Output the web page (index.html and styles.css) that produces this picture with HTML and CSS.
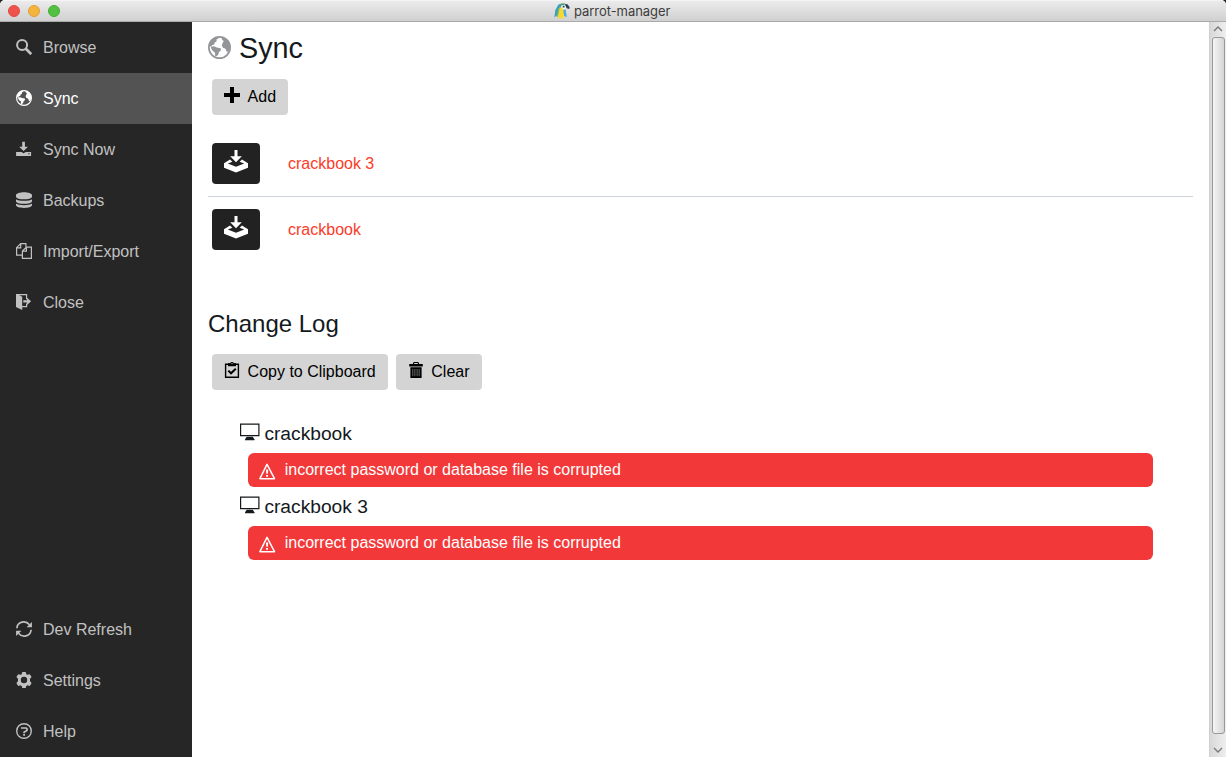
FILE: index.html
```html
<!DOCTYPE html>
<html lang="en">
<head>
<meta charset="utf-8">
<title>parrot-manager</title>
<link rel="stylesheet" href="styles.css">
</head>
<body>
<svg class="defs" width="0" height="0">
  <symbol id="search" viewBox="0 0 16 16"><circle cx="6.1" cy="6" r="5" fill="none" stroke="currentColor" stroke-width="2"/><path d="M9.6 9.5L15.2 15.2" stroke="currentColor" stroke-width="2.7"/></symbol>
  <symbol id="globe" viewBox="0 0 16 16"><circle cx="8" cy="8" r="7.4" fill="none" stroke="currentColor" stroke-width="1.2"/><path d="M2 7.5L4.2 7.2 6.1 8 8.8 8.5 9 10 7.6 11.2 7.2 12.8 5.8 14.2 5 14 4.9 11.6 3.2 10.2 2.3 8.9zM1.2 4.6L4.2 1.3 7 .6 7.3 1.8 5.8 2.5 6.1 3.5 4.6 4.7 4.2 6 2.8 6.3 2.2 7.4.9 7zM9.2.7L13 2.3 15.2 5.5 15.3 8.5 14.1 11 13 11 12.2 8.8 10.4 8.1 9.6 6.4 10.3 4.5 11 3.6 9.9 2.6z"/></symbol>
  <symbol id="download" viewBox="0 0 16 16"><path d="M6.2 .8h2.7v5H12L7.6 10 3.2 5.8h3zM.1 11h5.3l2.2 1.2L9.8 11h5.3v4H.1z"/><path class="nav-cut" d="M12.3 12.2h1.3v1h-1.3z"/></symbol>
  <symbol id="database" viewBox="0 0 16 16"><path d="M0 3.2C0-.7 16-.7 16 3.2v1.6C16 8.2 0 8.2 0 4.8zM0 7.2c2 2.2 14 2.2 16 0v2c0 3.4-16 3.4-16 0zM0 11.5c2 2.2 14 2.2 16 0v1.6c0 3.8-16 3.8-16 0z"/></symbol>
  <symbol id="files" viewBox="0 0 16 16"><g fill="none" stroke="currentColor" stroke-width="1.2"><path d="M6.3 12.2H.6V4.7L4.7.6h5.2v3.2M.6 4.8h4.1V.6M6.4 15.4V8.1l4-4h5v11.3zM6.4 8.2h4V4.1"/></g></symbol>
  <symbol id="exit" viewBox="0 0 16 16"><path d="M0 0h11.2v5.2h-1.2V1.2H3.2l3 1.5V12H10V9.4h1.2v3.8h-5V16L0 13.1zM7.3 6.3h3.8V3.7l4 3.6-4 3.7V8.4H7.3z"/></symbol>
  <symbol id="refresh" viewBox="0 0 16 16"><path d="M.9 7.2C1.3.6 9.6-1.2 13.5 3.7M15.1 8.8C14.7 15.4 6.4 17.2 2.5 12.3" fill="none" stroke="currentColor" stroke-width="1.7"/><path d="M15.9.9v5.3h-5.3zM.1 15.1V9.8h5.3z"/></symbol>
  <symbol id="gear" viewBox="0 0 16 16"><path fill-rule="evenodd" d="M6.3 0h3.4l.6 2.2 1.2.6 2.3-.6L15.6 5 14 6.8v2.4l1.6 1.8-1.8 2.9-2.3-.7-1.2.7-.6 2.1H6.3l-.6-2.1-1.2-.7-2.3.7L.4 11 2 9.2V6.8L.4 5l1.8-2.8 2.3.6 1.2-.6zM8 4.8a3.2 3.2 0 1 0 0 6.4 3.2 3.2 0 0 0 0-6.4z"/></symbol>
  <symbol id="help" viewBox="0 0 16 16"><circle cx="8" cy="8" r="7.3" fill="none" stroke="currentColor" stroke-width="1.4"/><path d="M5 5h5.1l.9.9v1.5L8.1 9.2v1" fill="none" stroke="currentColor" stroke-width="1.7"/><path d="M7.2 11h1.8v1.7H7.2z"/></symbol>
  <symbol id="plus" viewBox="0 0 16 16"><path d="M6 0h4v6h6v4h-6v6H6v-6H0V6h6z"/></symbol>
  <symbol id="inbox" viewBox="0 0 24 23"><path d="M10.5 0h3v6.3h4.3L12 12.3 6.2 6.3h4.3z"/><path fill-rule="evenodd" d="M6 9.4L0 13.3v4.4l12 4.9 12-4.9v-4.4l-6-3.9-2.4 2.3 4.6 1.7-8.2 3.4-8.2-3.4 4.6-1.7z"/></symbol>
  <symbol id="clipboard" viewBox="0 0 16 16"><path d="M1.6 2.2h12.8v13H1.6z" fill="none" stroke="currentColor" stroke-width="1.4"/><path d="M4 1.3h2.2a1.9 1.9 0 0 1 3.6 0H12v3H4z"/><path d="M4.3 8.6L7 11.3l4.8-4.6" fill="none" stroke="currentColor" stroke-width="2"/><circle class="button-cut" cx="8" cy="1.6" r=".6"/></symbol>
  <symbol id="trash" viewBox="0 0 16 16"><path d="M1.2 2h3.5l1-1.9h4.6l1 1.9h3.5v2.4H1.2zM2.4 5.3h11.2V16H2.4z"/><path class="button-cut" d="M6 1.9h4l-.4-.8H6.4z"/><path class="trash-lines" d="M4.8 7v7.2M6.9 7v7.2M9.1 7v7.2M11.2 7v7.2"/></symbol>
  <symbol id="monitor" viewBox="0 0 20 18"><path fill="none" stroke="currentColor" stroke-width="1.2" d="M.6 1.1h18.3v11.5H.6z"/><path d="M6.7 13.8h6l1.7 2.5v.9H5v-.9z"/></symbol>
  <symbol id="warning" viewBox="0 0 17 17"><path d="M8 1.4L.9 15.7h14.6z" fill="none" stroke="currentColor" stroke-width="1.5" stroke-linejoin="round"/><path d="M7 6.6h2.2l-.3 4.2H7.3zM7.1 12H9v1.8H7.1z"/></symbol>
</svg>
<div class="window">
  <header class="titlebar">
    <div class="lights"><i class="light red"></i><i class="light yellow"></i><i class="light green"></i></div>
    <svg class="parrot" viewBox="0 0 16 16"><path fill="#369fc0" d="M4.5 1.5L8 .8 7 4.5 3.4 12.5.4 14.2 1.4 7z"/><path fill="#8fbf55" d="M4.6 5L7 3.6 4 14.6 2.6 13z"/><path fill="#f8d934" d="M5.8 5L8 4l2.2 3-.2 8-2.8.6L4 15z"/><path fill="#48aedb" d="M9 5.5l2.6 1 1.2 7.8-2.6-1.4z"/><path fill="#f4f4ed" d="M8 1.5h4l-.3 4.2-2.2 1.2-2-2.3z"/><path fill="#2c3f57" d="M10.6.9l2.8.4L15.6 4l-.3 2-2.6-.8zM8.7 2.8h1.8v1.6H8.7z"/><path fill="#4c9562" d="M5.6 1L10 .2l2 1-4 1z"/></svg>
    <span class="app-name">parrot-manager</span>
  </header>
  <div class="body">
    <nav class="sidebar">
      <div class="nav-group">
        <a class="nav-item"><svg class="icon"><use href="#search"/></svg>Browse</a>
        <a class="nav-item active"><svg class="icon"><use href="#globe"/></svg>Sync</a>
        <a class="nav-item"><svg class="icon"><use href="#download"/></svg>Sync Now</a>
        <a class="nav-item"><svg class="icon"><use href="#database"/></svg>Backups</a>
        <a class="nav-item"><svg class="icon"><use href="#files"/></svg>Import/Export</a>
        <a class="nav-item"><svg class="icon"><use href="#exit"/></svg>Close</a>
      </div>
      <div class="nav-group">
        <a class="nav-item"><svg class="icon"><use href="#refresh"/></svg>Dev Refresh</a>
        <a class="nav-item"><svg class="icon"><use href="#gear"/></svg>Settings</a>
        <a class="nav-item"><svg class="icon"><use href="#help"/></svg>Help</a>
      </div>
    </nav>
    <main class="content">
      <h1 class="page-title"><svg class="title-icon"><use href="#globe"/></svg>Sync</h1>
      <div class="actions"><button class="button"><svg class="icon"><use href="#plus"/></svg>Add</button></div>
      <ul class="sources">
        <li class="source"><button class="import"><svg class="import-icon"><use href="#inbox"/></svg></button><a class="source-name">crackbook 3</a></li>
        <li class="source"><button class="import"><svg class="import-icon"><use href="#inbox"/></svg></button><a class="source-name">crackbook</a></li>
      </ul>
      <h2 class="section-title">Change Log</h2>
      <div class="actions">
        <button class="button"><svg class="icon"><use href="#clipboard"/></svg>Copy to Clipboard</button>
        <button class="button"><svg class="icon"><use href="#trash"/></svg>Clear</button>
      </div>
      <div class="log">
        <section class="log-entry">
          <h3 class="log-name"><svg class="monitor"><use href="#monitor"/></svg>crackbook</h3>
          <div class="alert"><svg class="warning"><use href="#warning"/></svg><span>incorrect password or database file is corrupted</span></div>
        </section>
        <section class="log-entry">
          <h3 class="log-name"><svg class="monitor"><use href="#monitor"/></svg>crackbook 3</h3>
          <div class="alert"><svg class="warning"><use href="#warning"/></svg><span>incorrect password or database file is corrupted</span></div>
        </section>
      </div>
    </main>
    <div class="scrollbar">
      <svg class="arrow" viewBox="0 0 10 6"><path d="M1 5l4-4 4 4"/></svg>
      <div class="thumb"></div>
      <svg class="arrow" viewBox="0 0 10 6"><path d="M1 1l4 4 4-4"/></svg>
    </div>
  </div>
</div>
</body>
</html>
```
FILE: styles.css
```css
* { box-sizing: border-box; }
body { margin: 0; background: #222; font: 16px/20px "Liberation Sans", Arial, sans-serif; color: #14191d; }
svg { fill: currentColor; flex: none; }
.defs { position: absolute; }
.nav-cut { fill: #262626; }
.button-cut { fill: #d4d4d4; }
.trash-lines { stroke: #858585; stroke-width: .8; }
.window { width: 1226px; height: 757px; display: flex; flex-direction: column; overflow: hidden; border-radius: 5px 5px 0 0; background: #fff; }
.titlebar { height: 22px; flex: none; display: flex; align-items: center; background: linear-gradient(#ebebeb, #d0d0d0); border-bottom: 1px solid #aaa; border-top: 1px solid #f4f4f4; }
.lights { display: flex; gap: 8px; padding-left: 8px; width: 554px; }
.light { width: 12px; height: 12px; border-radius: 50%; border: 1px solid; }
.red { background: #ed544d; border-color: #dc4b44; }
.yellow { background: #f5b53d; border-color: #df9f34; }
.green { background: #52c043; border-color: #43ad35; }
.parrot { width: 16px; height: 16px; margin-right: 4px; }
.app-name { font: 13px/18px Inter, sans-serif; letter-spacing: -.05px; color: #3d3d3d; padding-bottom: 1px; }
.body { flex: 1; display: flex; min-height: 0; }
.sidebar { width: 192px; background: #262626; display: flex; flex-direction: column; justify-content: space-between; }
.nav-item { height: 51px; display: flex; align-items: center; gap: 11px; padding-left: 16px; color: #c1c1c1; }
.nav-item.active { background: #535353; color: #fff; }
.icon { width: 16px; height: 16px; }
.nav-item .icon { margin-top: -1px; }
.content { flex: 1; padding: 8px 16px 0; }
.page-title { display: flex; align-items: center; gap: 8px; height: 35px; margin: 0; font-size: 28.8px; font-weight: 400; }
.title-icon { width: 23px; height: 23px; color: #939598; }
.actions { display: flex; gap: 8px; padding-left: 4px; margin-top: 14px; }
.button { height: 36px; display: flex; align-items: center; gap: 7.6px; padding: 0 12px; border: 0; border-radius: 4px; background: #d4d4d4; font: inherit; color: #000; }
.button .icon { margin-top: -4px; }
.sources { list-style: none; margin: 16px 0 0; padding: 0; }
.source { height: 66px; display: flex; align-items: flex-start; gap: 28px; padding: 12px 0 0 4px; border-bottom: 1px solid #ced4d9; }
.source:last-child { border: 0; }
.import { width: 48px; height: 41px; display: flex; justify-content: center; padding: 7px 0 0; border: 0; border-radius: 4px; background: #222; color: #fff; }
.import-icon { width: 24px; height: 23px; }
.source-name { padding-top: 11px; line-height: 20px; color: #fb3b29; }
.section-title { margin: 45px 0 0; font-size: 24px; line-height: 32px; font-weight: 400; }
.log { padding: 30px 40px 0 32px; }
.log-entry { height: 73px; }
.log-name { display: flex; align-items: center; gap: 4.4px; margin: 0; height: 28px; font-size: 19.2px; font-weight: 400; }
.monitor { width: 20px; height: 18px; margin-top: -4px; }
.alert { height: 34px; margin: 5px 0 0 8px; padding-left: 11px; display: flex; align-items: center; gap: 8.7px; border-radius: 6px; background: #f23839; color: #fff; }
.warning { width: 17px; height: 17px; margin-top: 2px; }
.scrollbar { width: 17px; display: flex; flex-direction: column; align-items: center; padding: 4px 0; background: linear-gradient(90deg, #d8d8d8, #eee); border-left: 1px solid #d0d0d0; }
.arrow { width: 10px; height: 6px; fill: none; stroke: #777; stroke-width: 1.3; }
.thumb { width: 13px; height: 698px; margin: 5px 0 13px; border: 1px solid #999; border-radius: 3px; background: linear-gradient(90deg, #f5f5f5, #d5d5d5); }
```
